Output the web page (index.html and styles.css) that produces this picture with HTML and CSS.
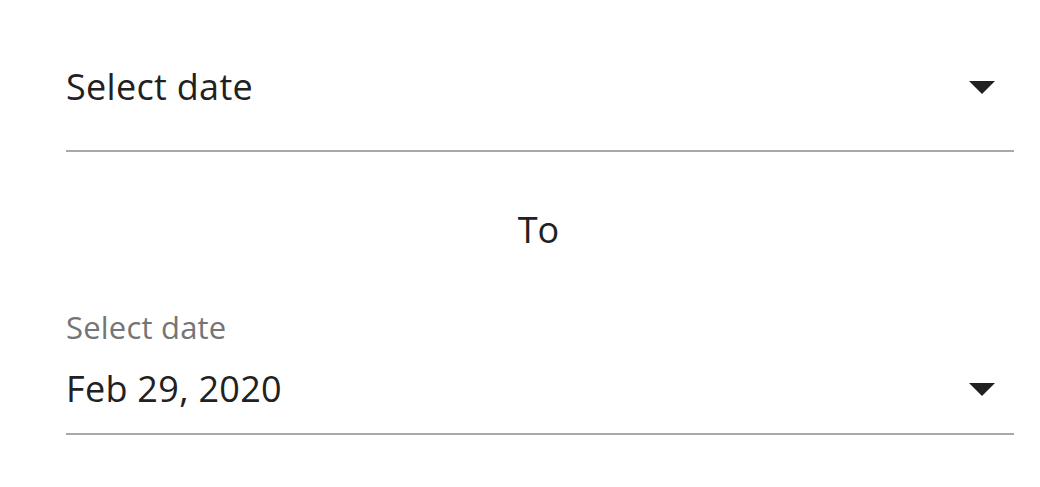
FILE: index.html
```html
<!DOCTYPE html>
<html>
<head>
<meta charset="utf-8">
<link rel="stylesheet" href="styles.css">
</head>
<body>
<div class="page">
  <div class="field field-first">
    <span class="value">Select date</span>
    <svg class="arrow" width="26" height="13" viewBox="0 0 26 13"><path d="M0 0H26L13 13Z" fill="#212121"/></svg>
  </div>
  <div class="to">To</div>
  <div class="field field-second">
    <div class="label">Select date</div>
    <div class="row">
      <span class="value">Feb 29, 2020</span>
      <svg class="arrow" width="26" height="13" viewBox="0 0 26 13"><path d="M0 0H26L13 13Z" fill="#212121"/></svg>
    </div>
  </div>
</div>
</body>
</html>
```

FILE: styles.css
```css
html, body {
  margin: 0;
  padding: 0;
  background: #ffffff;
}
.page {
  padding: 63px 26px 0 66px;
  font-family: "Open Sans", "Noto Sans", sans-serif;
  color: #212121;
  display: flex;
  flex-direction: column;
}
.field {
  border-bottom: 2px solid #a8a8a8;
}
.field-first {
  display: flex;
  align-items: center;
  justify-content: space-between;
  padding-bottom: 39px;
}
.value {
  font-size: 36px;
  line-height: 48px;
  letter-spacing: 0.3px;
}
.arrow {
  display: block;
  margin-right: 19px;
}
.to {
  margin-top: 54px;
  font-size: 36px;
  line-height: 48px;
  text-align: center;
  padding-right: 3px;
}
.field-second {
  margin-top: 53px;
  padding-bottom: 20px;
}
.label {
  font-size: 31px;
  line-height: 40px;
  letter-spacing: 0.2px;
  color: #757575;
}
.row {
  margin-top: 18px;
  display: flex;
  align-items: center;
  justify-content: space-between;
}
```
